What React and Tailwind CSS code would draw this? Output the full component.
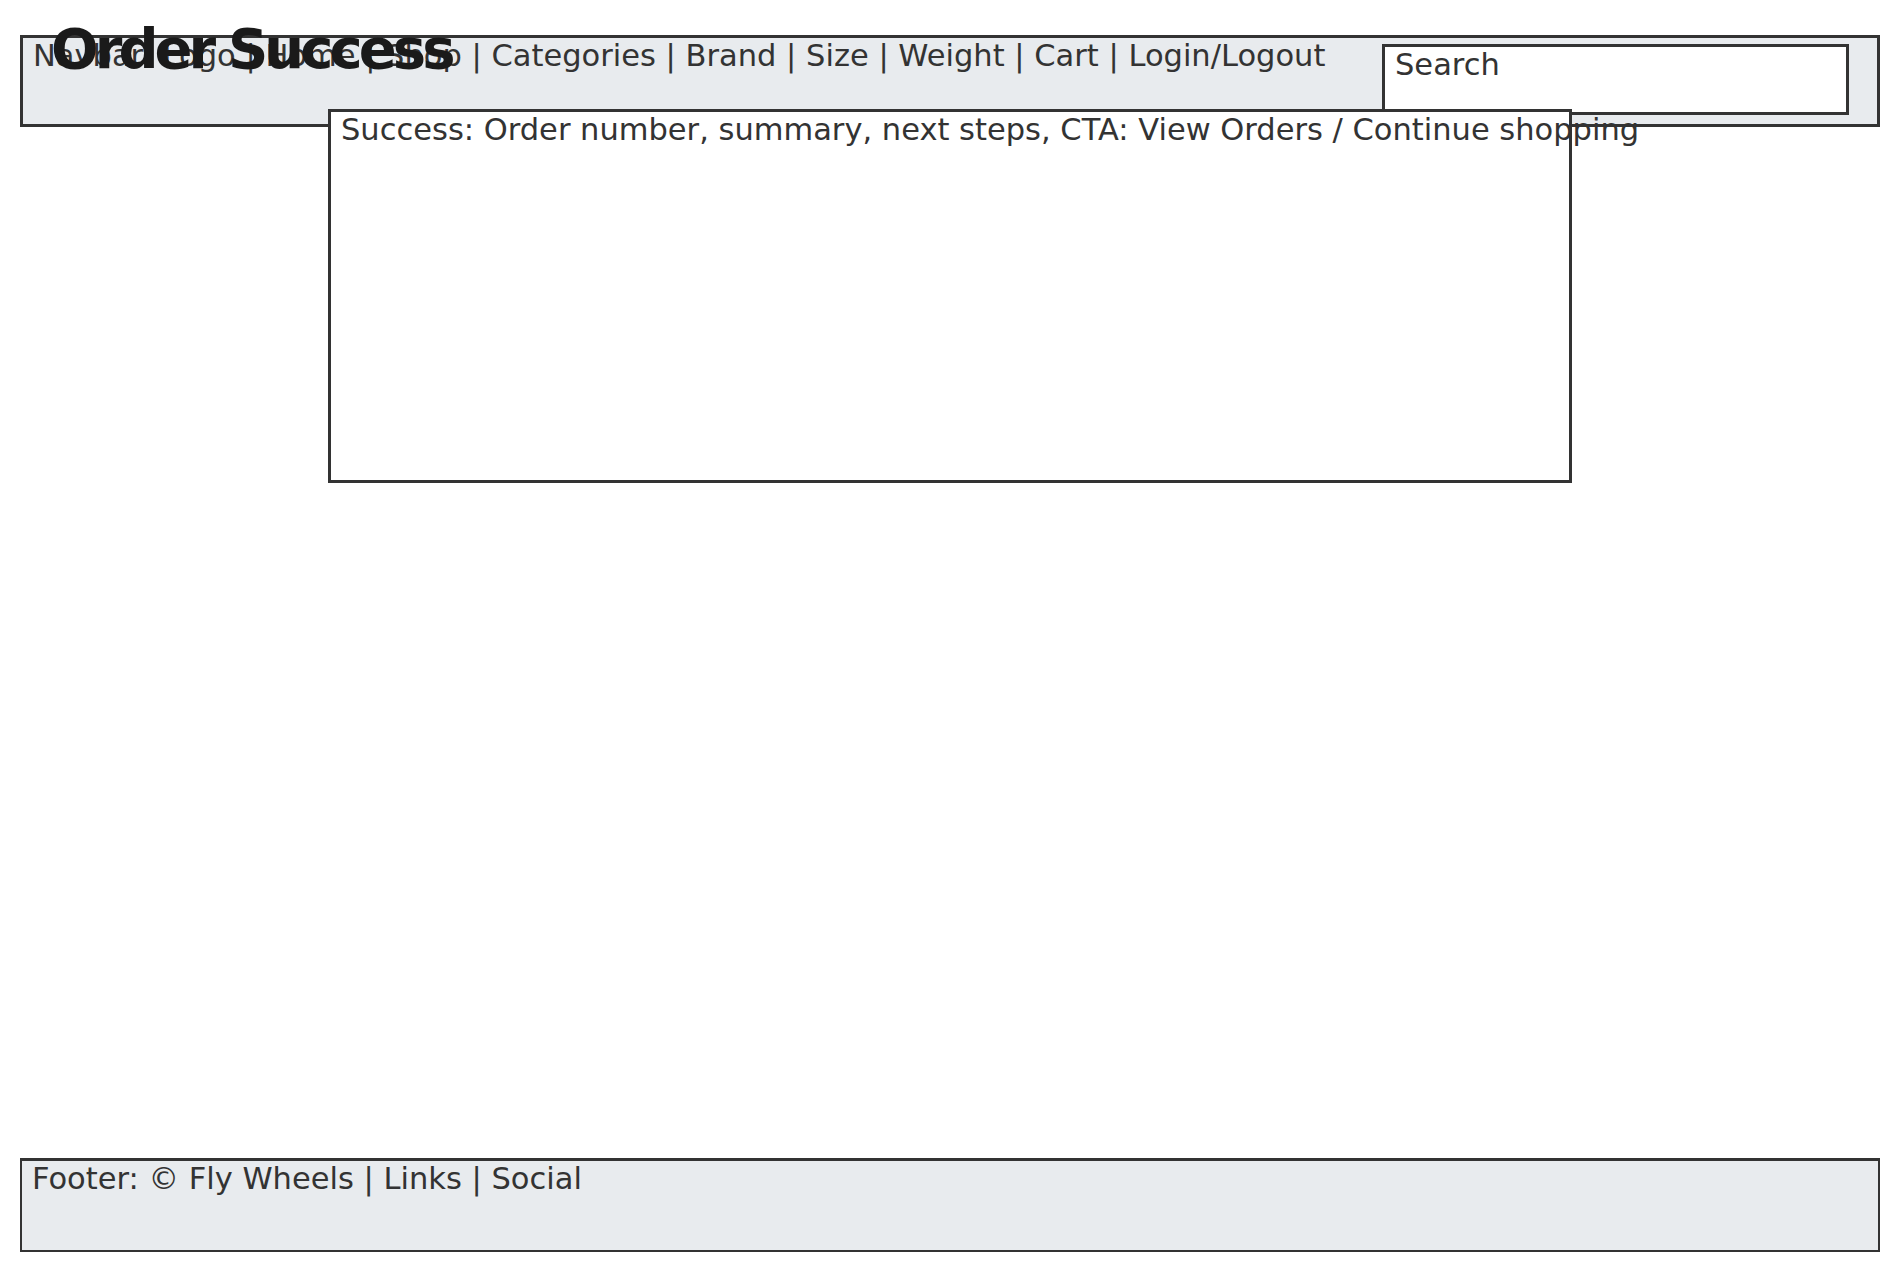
import React from 'react';

const App = () => {
  return (
    <div className="relative min-h-[1272px] bg-white px-[20px] pt-[35px] font-['DejaVu_Sans',sans-serif] text-[30.5px] leading-[normal] text-[#333]">
      {/* NAVBAR */}
      <header className="flex h-[92px] justify-between border-[3px] border-[#333] bg-[#e8ebee]">
        <p className="whitespace-nowrap pl-[10px]">
          Navbar: Logo | Home | Shop | Categories | Brand | Size | Weight | Cart | Login/Logout
        </p>
        <div className="mr-[28px] mt-[6px] h-[71px] w-[467px] border-[3px] border-[#333] bg-white pl-[10px]">
          Search
        </div>
      </header>

      <h1 className="absolute left-[51px] top-[21px] text-[56px] font-bold leading-none tracking-[-0.07em] text-[#1a1a1a]">
        Order Success
      </h1>

      {/* CONTENT */}
      <main className="relative z-10 mx-auto -mt-[18px] h-[374px] w-[1244px] whitespace-nowrap border-[3px] border-[#333] bg-white pl-[10px]">
        Success: Order number, summary, next steps, CTA: View Orders / Continue shopping
      </main>

      {/* FOOTER */}
      <footer className="mt-[675px] h-[94px] border-x-2 border-b-2 border-t-[3px] border-[#333] bg-[#e8ebee] pl-[10px]">
        Footer: © Fly Wheels | Links | Social
      </footer>
    </div>
  );
};

export default App;
